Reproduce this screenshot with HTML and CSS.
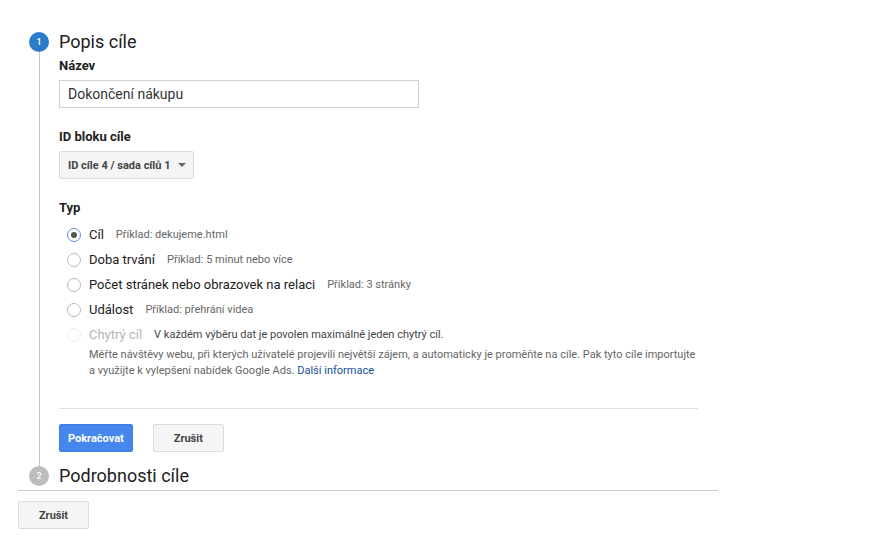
FILE: index.html
```html
<!DOCTYPE html>
<html lang="cs">
<head>
    <meta charset="UTF-8">
    <meta name="viewport" content="width=device-width, initial-scale=1.0">
    <title>Nový cíl</title>
    <link rel="stylesheet" href="styles.css">
</head>
<body>
    <div class="page">
        <div class="wizard">
            <!-- Step 1 -->
            <div class="step">
                <div class="step-header">
                    <span class="step-num active">1</span>
                    <h2>Popis cíle</h2>
                </div>
                <div class="step-body">
                    <label class="field-label">Název</label>
                    <input class="text-input" type="text" value="Dokončení nákupu">

                    <label class="field-label spaced">ID bloku cíle</label>
                    <button class="dropdown">ID cíle 4 / sada cílů 1 <span class="caret"></span></button>

                    <label class="field-label spaced">Typ</label>
                    <ul class="radio-list">
                        <li class="radio-row">
                            <span class="radio checked"></span>
                            <span class="radio-label">Cíl</span>
                            <span class="example">Příklad: dekujeme.html</span>
                        </li>
                        <li class="radio-row">
                            <span class="radio"></span>
                            <span class="radio-label">Doba trvání</span>
                            <span class="example">Příklad: 5 minut nebo více</span>
                        </li>
                        <li class="radio-row">
                            <span class="radio"></span>
                            <span class="radio-label">Počet stránek nebo obrazovek na relaci</span>
                            <span class="example">Příklad: 3 stránky</span>
                        </li>
                        <li class="radio-row">
                            <span class="radio"></span>
                            <span class="radio-label">Událost</span>
                            <span class="example">Příklad: přehrání videa</span>
                        </li>
                        <li class="radio-row disabled">
                            <span class="radio"></span>
                            <span class="radio-label">Chytrý cíl</span>
                            <span class="example note">V každém výběru dat je povolen maximálně jeden chytrý cíl.</span>
                        </li>
                    </ul>
                    <p class="help">Měřte návštěvy webu, při kterých uživatelé projevili největší zájem, a automaticky je proměňte na cíle. Pak tyto cíle importujte a využijte k vylepšení nabídek Google Ads. <a href="#">Další informace</a></p>

                    <div class="separator"></div>

                    <div class="actions">
                        <button class="btn primary">Pokračovat</button>
                        <button class="btn">Zrušit</button>
                    </div>
                </div>
            </div>

            <!-- Step 2 -->
            <div class="step">
                <div class="step-header">
                    <span class="step-num">2</span>
                    <h2>Podrobnosti cíle</h2>
                </div>
            </div>
        </div>

        <div class="footer">
            <button class="btn">Zrušit</button>
        </div>
    </div>
</body>
</html>
```

FILE: styles.css
```css
* {
    margin: 0;
    padding: 0;
    box-sizing: border-box;
}

body {
    font-family: Roboto, 'Liberation Sans', Arial, sans-serif;
    background: #fff;
    color: #212121;
}

.page {
    width: 718px;
    padding: 32px 0 0 18px;
}

/* Wizard steps */
.wizard {
    padding-left: 11px;
}

.step-header {
    display: flex;
    align-items: center;
    gap: 10px;
    height: 20px;
}

.step-header h2 {
    font-size: 18px;
    font-weight: 400;
    line-height: 20px;
    color: #212121;
}

.step-num {
    width: 20px;
    height: 20px;
    border-radius: 50%;
    background: #bdbdbd;
    color: #fff;
    font-size: 9px;
    font-weight: 500;
    display: flex;
    align-items: center;
    justify-content: center;
}

.step-num.active {
    background: #2b7bcd;
}

.step-body {
    margin-left: 10px;
    border-left: 1px solid #c6c6c6;
    padding: 6px 0 14px 19px;
}

/* Fields */
.field-label {
    display: block;
    font-size: 13px;
    font-weight: 700;
    line-height: 16px;
    color: #212121;
    margin-bottom: 6px;
}

.field-label.spaced {
    margin-top: 21px;
}

.text-input {
    display: block;
    width: 360px;
    height: 28px;
    border: 1px solid #d0d0d0;
    padding: 0 8px;
    font-family: inherit;
    font-size: 14px;
    color: #333;
}

.dropdown {
    display: flex;
    align-items: center;
    gap: 8px;
    height: 28px;
    padding: 0 7px 0 8px;
    background: #f5f5f5;
    border: 1px solid #dcdcdc;
    border-radius: 2px;
    font-family: inherit;
    font-size: 11px;
    font-weight: 700;
    color: #444;
}

.caret {
    width: 0;
    height: 0;
    border-left: 4px solid transparent;
    border-right: 4px solid transparent;
    border-top: 4px solid #666;
}

/* Radios */
.radio-list {
    list-style: none;
    margin-top: 5px;
}

.radio-row {
    display: flex;
    align-items: center;
    height: 25px;
    padding-left: 8px;
}

.radio {
    width: 14px;
    height: 14px;
    border: 1px solid #b8b8b8;
    border-radius: 50%;
    margin-right: 8px;
    display: flex;
    align-items: center;
    justify-content: center;
}

.radio.checked {
    border-color: #5a8fd6;
}

.radio.checked::after {
    content: "";
    width: 6px;
    height: 6px;
    border-radius: 50%;
    background: #555;
}

.radio-label {
    font-size: 13px;
    color: #212121;
    margin-right: 12px;
}

.example {
    font-size: 11px;
    color: #666;
}

.disabled .radio {
    border-color: #eee;
}

.disabled .radio-label {
    color: #b5b5b5;
}

.example.note {
    color: #444;
}

.help {
    margin-left: 30px;
    font-size: 11px;
    line-height: 16px;
    color: #666;
    max-width: 612px;
}

.help a {
    color: #15509c;
    text-decoration: none;
}

.separator {
    width: 639px;
    height: 1px;
    background: #e0e0e0;
    margin: 29px 0 15px;
}

/* Buttons */
.actions {
    display: flex;
    gap: 20px;
}

.btn {
    height: 28px;
    min-width: 71px;
    padding: 0 12px;
    background: #f5f5f5;
    border: 1px solid #dcdcdc;
    border-radius: 2px;
    font-family: inherit;
    font-size: 11px;
    font-weight: 700;
    color: #444;
}

.btn.primary {
    background: #4687ee;
    border-color: #3f7fe4;
    color: #fff;
    padding: 0 8px;
}

.footer {
    border-top: 1px solid #ccc;
    margin-top: 4px;
    padding-top: 10px;
}
```
